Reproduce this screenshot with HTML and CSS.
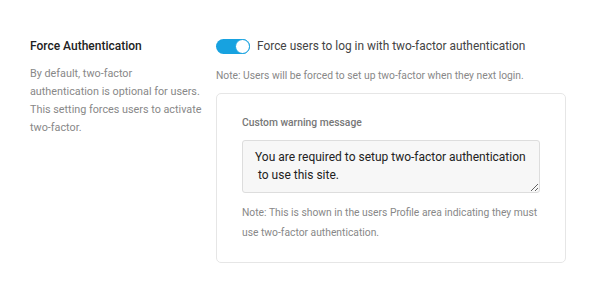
FILE: index.html
```html
<!DOCTYPE html>
<html lang="en">
<head>
  <meta charset="UTF-8">
  <title>Force Authentication</title>
  <link rel="stylesheet" href="styles.css">
</head>
<body>
  <div class="setting-row">
    <div class="setting-info">
      <h3>Force Authentication</h3>
      <p>By default, two-factor authentication is optional for users. This setting forces users to activate two-factor.</p>
    </div>

    <div class="setting-options">
      <label class="toggle-line">
        <span class="toggle on"><span class="knob"></span></span>
        <span class="toggle-text">Force users to log in with two-factor authentication</span>
      </label>
      <p class="note">Note: Users will be forced to set up two-factor when they next login.</p>

      <div class="box">
        <label class="field-label" for="warning">Custom warning message</label>
        <textarea id="warning" rows="2">You are required to setup two-factor authentication
 to use this site.</textarea>
        <p class="note">Note: This is shown in the users Profile area indicating they must use two-factor authentication.</p>
      </div>
    </div>
  </div>
</body>
</html>
```

FILE: styles.css
```css
:root {
  --blue: #17a2e0;
  --text: #333;
  --muted: #888;
  --border: #e6e6e6;
}

body {
  margin: 0;
  font-family: Roboto, "Liberation Sans", Arial, sans-serif;
  background: #fff;
  color: var(--text);
}

.setting-row {
  display: flex;
  padding: 36px 34px 0 30px;
}

.setting-info {
  width: 186px;
  flex-shrink: 0;
}

.setting-info h3 {
  margin: 3px 0 0;
  font-size: 12px;
  font-weight: 500;
  color: #222;
}

.setting-info p {
  max-width: 172px;
  margin: 12px 0 0;
  font-size: 10.8px;
  line-height: 18px;
  color: var(--muted);
}

.setting-options {
  flex: 1;
}

.toggle-line {
  display: flex;
  align-items: center;
  gap: 7px;
  height: 20px;
}

.toggle {
  position: relative;
  width: 34px;
  height: 15px;
  border-radius: 8px;
  background: #ccc;
}

.toggle.on {
  background: var(--blue);
}

.toggle .knob {
  position: absolute;
  top: 0;
  right: 0;
  width: 13px;
  height: 13px;
  border-radius: 50%;
  background: #fff;
  border: 1px solid var(--blue);
}

.toggle-text {
  font-size: 11.9px;
  color: #444;
}

.note {
  margin: 10px 0 0;
  font-size: 10.3px;
  line-height: 20px;
  color: var(--muted);
}

.box {
  margin-top: 7px;
  border: 1px solid var(--border);
  border-radius: 5px;
  padding: 22px 25px 19px;
}

.field-label {
  display: block;
  font-size: 10.3px;
  font-weight: 500;
  color: #777;
}

textarea {
  display: block;
  box-sizing: border-box;
  width: 100%;
  height: 53px;
  margin-top: 11px;
  padding: 7px 12px;
  font-family: inherit;
  font-size: 12px;
  line-height: 18px;
  color: #222;
  background: #f7f7f7;
  border: 1px solid #ddd;
  border-radius: 3px;
  resize: vertical;
}

.box .note {
  margin-top: 10px;
}
```
